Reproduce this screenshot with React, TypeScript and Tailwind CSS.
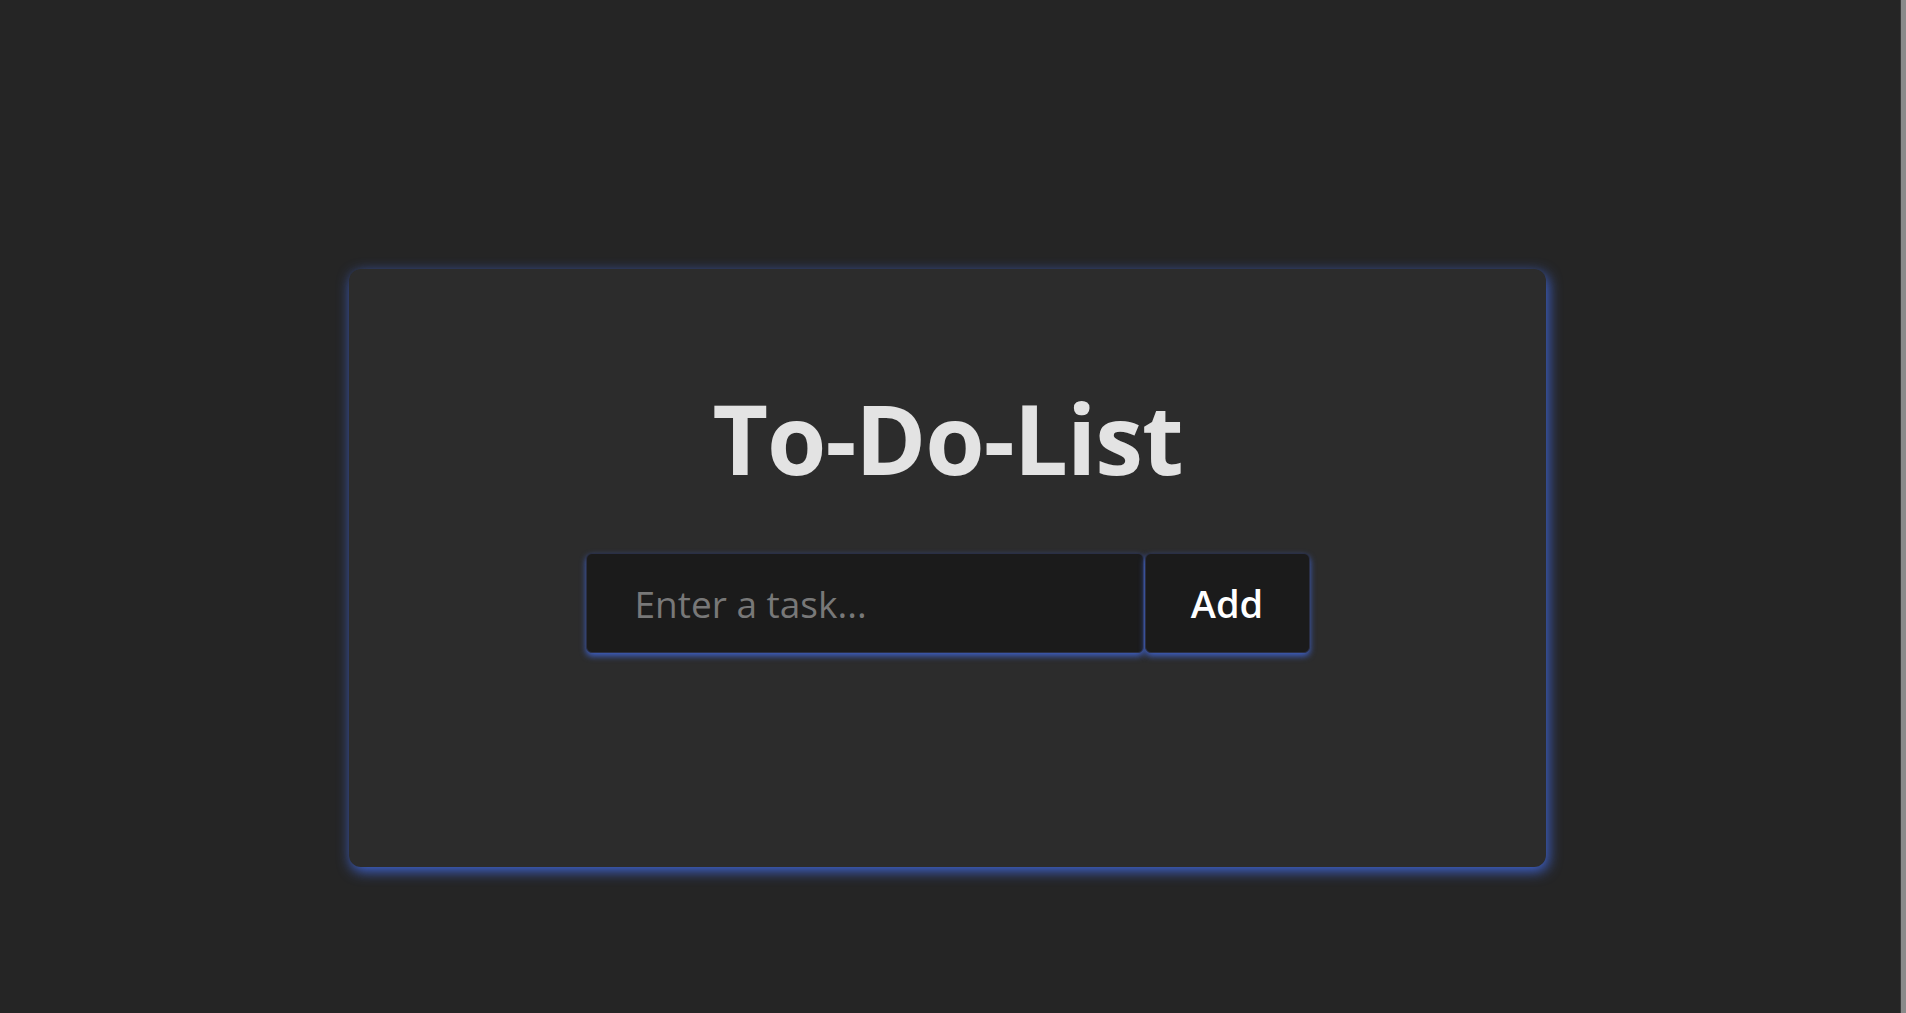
import { useState } from "react";

const App = () => {
  const [task, setTask] = useState("");

  return (
    <div className="flex min-h-[1013px] w-full bg-[#252525] font-['Open_Sans','Noto_Sans',sans-serif]">
      <div className="flex-1 pr-[5px]">
        <div className="mx-auto mt-[269px] flex h-[598px] w-[1197px] flex-col items-center rounded-xl bg-[#2c2c2c] pt-[121px] shadow-[2px_4px_14px_rgba(65,105,225,0.95)]">
          <h1 className="text-[96px] font-bold leading-none tracking-[-1px] text-[#e3e3e3]">To-Do-List</h1>
          <div className="mt-[67px] flex gap-px">
            <input
              value={task}
              onChange={(e) => setTask(e.target.value)}
              placeholder="Enter a task..."
              className="h-[100px] w-[558px] rounded-md border border-[#2a2f45] bg-[#1b1b1b] px-12 text-[37px] font-medium text-[#e3e3e3] shadow-[0_3px_6px_rgba(65,105,225,0.85)] outline-none placeholder:text-[#787878]"
            />
            <button className="h-[100px] w-[165px] rounded-md border border-[#2a2f45] bg-[#1b1b1b] text-[38px] font-semibold text-white shadow-[0_3px_6px_rgba(65,105,225,0.85)]">
              Add
            </button>
          </div>
        </div>
      </div>
      <div className="w-[6px] border-l border-[#3a3a3a] bg-[#8a8a8a]" />
    </div>
  );
};

export default App;
